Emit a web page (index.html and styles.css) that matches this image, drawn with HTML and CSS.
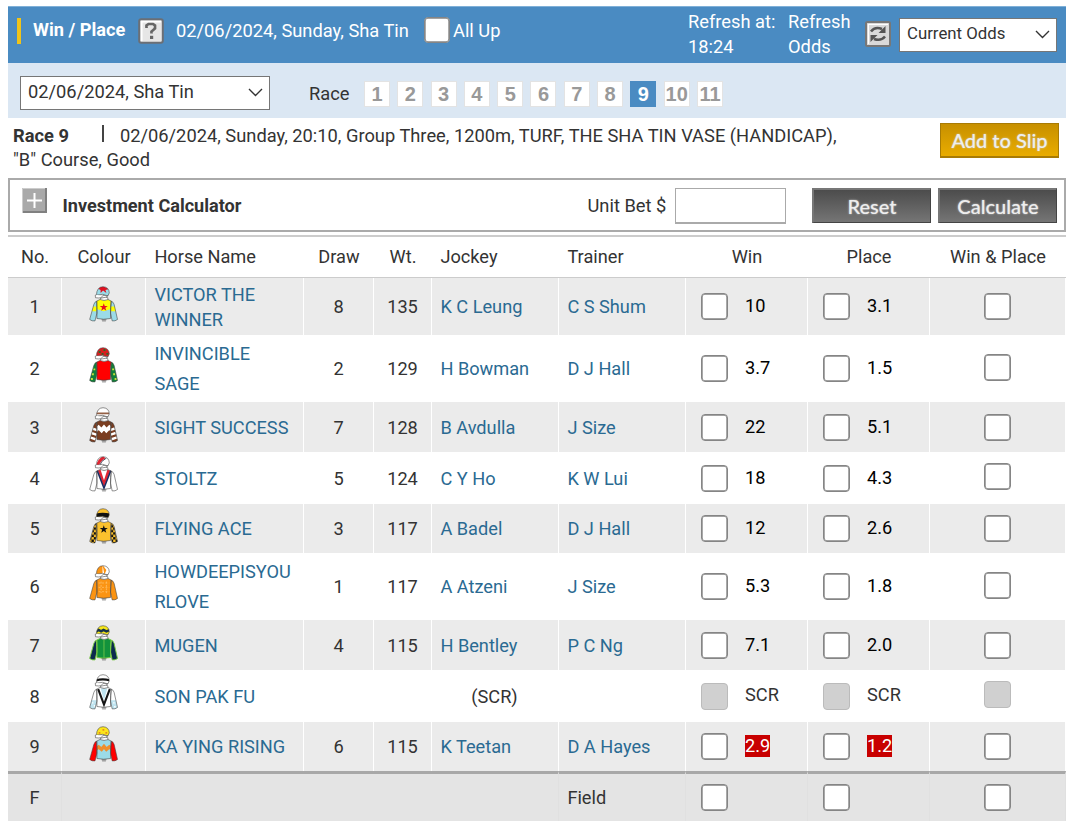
FILE: index.html
```html
<!DOCTYPE html>
<html lang="en">
<head>
    <meta charset="UTF-8">
    <title>Win / Place</title>
    <link rel="stylesheet" href="styles.css">
</head>
<body>
<!-- shared shapes of the silks -->
<svg class="defs" width="0" height="0">
    <defs>
        <path id="body" d="M8 15.5L12 13.5Q15.5 15.5 19 13.5L23 15.5L22.3 22V33.5Q15 35 8.2 33.5V22Z"/>
        <path id="sleeves" d="M8 15.5Q6 16 5 19L.7 34.5Q3 36.5 6.2 36L8.2 28ZM23 15.5Q25 16 26 19L29.5 34.5Q27 36.5 24 36L22.3 28Z"/>
        <path id="cap" d="M7.7 9.3Q8 .8 14.5 .6Q20.7 1 21 7L19.5 10.2L14 8.5Z"/>
        <path id="face" d="M7.7 9L6.5 9.3L6.7 12Q10 12.5 12.5 12L14.5 9.5L19.5 10L17.5 11.5L12 12.5V14Q15.5 15.5 19.5 14V12L17.5 11.5M13 34.8H18M13.5 36H17.5"/>
        <clipPath id="bodyClip"><use href="#body"/></clipPath>
        <clipPath id="sleeveClip"><use href="#sleeves"/></clipPath>
        <clipPath id="capClip"><use href="#cap"/></clipPath>
        <path id="star" d="M15.3 17.7L16.3 20.6H19.4L16.9 22.4L17.9 25.5L15.3 23.6L12.6 25.5L13.6 22.4L11.1 20.6H14.3Z"/>
        <pattern id="check" width="5" height="5" patternUnits="userSpaceOnUse"><path d="M0 0H5V5H0Z" fill="#fbc12d"/><path d="M0 0H2.5V2.5H0ZM2.5 2.5H5V5H2.5Z" fill="#111"/></pattern>
    </defs>
</svg>
<div class="all">
    <div class="top">
        <span class="mark"></span>
        <b class="title">Win / Place</b>
        <svg class="help" width="26" height="26" viewBox="0 0 26 26">
            <rect x="1.2" y="1.2" width="23.6" height="23.6" rx="2" fill="#e6e6e6" stroke="#6b6f75" stroke-width="2"/>
            <path d="M3 3H23V4.500H4.500V23H3Z" fill="#fff"/>
            <path d="M8.500 10V7.500L10.500 6H15L17 7.500V10.500L13.500 13.500V15.500" fill="none" stroke="#666" stroke-width="2.700"/>
            <rect x="12" y="17.800" width="3.200" height="3.200" fill="#666"/>
        </svg>
        <span class="date">02/06/2024, Sunday, Sha Tin</span>
        <label class="allup"><input type="checkbox">All Up</label>
        <div class="refreshAt">Refresh at:<br>18:24</div>
        <div class="refreshOdds">Refresh<br>Odds</div>
        <svg class="refresh" width="26" height="26" viewBox="0 0 26 26">
            <rect x="1" y="1" width="24" height="24" rx="1.500" fill="#d9d9d9" stroke="#777" stroke-width="2"/>
            <path d="M3 3H23V4H4V23H3Z" fill="#fff"/>
            <path d="M6 10.500Q10 5 17 8M20 15.500Q16 20.500 9 18" fill="none" stroke="#555" stroke-width="2.500"/>
            <path d="M20.500 5V12H13.500ZM5.500 21V14H12.500Z" fill="#555"/>
        </svg>
        <div class="select odds"><span>Current Odds</span><svg width="15" height="9" viewBox="0 0 15 9"><path d="M1 1L7.500 7.500L14 1"/></svg></div>
    </div>
    <div class="nav">
        <div class="select meeting"><span>02/06/2024, Sha Tin</span><svg width="15" height="9" viewBox="0 0 15 9"><path d="M1 1L7.500 7.500L14 1"/></svg></div>
        <span class="race">Race</span>
        <ul>
            <li>1</li><li>2</li><li>3</li><li>4</li><li>5</li><li>6</li><li>7</li><li>8</li><li class="current">9</li><li>10</li><li>11</li>
        </ul>
    </div>
    <div class="info">
        <p><b>Race 9</b><i class="sep"></i>02/06/2024, Sunday, 20:10, Group Three, 1200m, TURF, THE SHA TIN VASE (HANDICAP),<br>"B" Course, Good</p>
        <button class="btn gold">Add to Slip</button>
    </div>
    <div class="calc">
        <svg class="plus" width="25" height="25" viewBox="0 0 25 25">
            <path d="M0 0H25V25H0Z" fill="#a9a9a9"/>
            <path d="M.5 25V.5H25" fill="none" stroke="#ccc"/>
            <path d="M1 24H24V0" fill="none" stroke="#808080" stroke-width="2"/>
            <path d="M12.500 5V20M5 12.500H20" stroke="#fff" stroke-width="2"/>
        </svg>
        <b>Investment Calculator</b>
        <span class="unit">Unit Bet $</span>
        <input type="text" class="bet">
        <button class="btn">Reset</button>
        <button class="btn calculate">Calculate</button>
    </div>
    <table>
        <colgroup>
            <col class="c1"><col class="c2"><col class="c3"><col class="c4"><col class="c5"><col class="c6"><col class="c6"><col class="c7"><col class="c7"><col class="c8">
        </colgroup>
        <thead>
        <tr><th>No.</th><th>Colour</th><th class="l">Horse Name</th><th>Draw</th><th>Wt.</th><th class="l">Jockey</th><th class="l">Trainer</th><th>Win</th><th>Place</th><th>Win &amp; Place</th></tr>
        </thead>
        <tbody>
        <tr class="h57">
            <td>1</td>
            <td class="silk"><svg width="29" height="36" viewBox="0 0 30 37">
                <use href="#sleeves" fill="#9bdbe8"/><path clip-path="url(#sleeveClip)" d="M0 21H8V26H0ZM22 21H30V26H22Z" fill="#ff0"/>
                <use href="#body" fill="#9bdbe8"/><path clip-path="url(#bodyClip)" d="M6 12H25V23L15 26L6 23Z" fill="#ff0"/><use href="#star" fill="#e8101c"/>
                <use href="#cap" fill="#9bdbe8"/><path clip-path="url(#capClip)" d="M8 2L14 0L21 3L17 4L18 7L14.500 4.500L12 7V4Z" fill="#e01020"/>
                <g class="line"><use href="#sleeves"/><use href="#body"/><use href="#cap"/><use href="#face" class="face"/></g>
            </svg></td>
            <td class="l"><a>VICTOR THE<br>WINNER</a></td><td>8</td><td>135</td><td class="l"><a>K C Leung</a></td><td class="l"><a>C S Shum</a></td>
            <td class="bet-cell"><input type="checkbox"><span>10</span></td><td class="bet-cell"><input type="checkbox"><span>3.1</span></td><td class="wp"><input type="checkbox"></td>
        </tr>
        <tr class="h67 even">
            <td>2</td>
            <td class="silk"><svg width="29" height="36" viewBox="0 0 30 37">
                <use href="#sleeves" fill="#12803a"/><path d="M4.500 22h2v2h-2zM3 27h2v2h-2zM2 32h2v2h-2zM24 22h2v2h-2zM25 27h2v2h-2zM26.500 32h2v2h-2z" fill="#c6e23c"/>
                <use href="#body" fill="#f00"/><use href="#cap" fill="#d81e20"/><path d="M10 4h2v2h-2zM15 2h2v2h-2zM13 6h2v2h-2zM18 6h2v2h-2z" fill="#286b2a"/>
                <g class="line"><use href="#sleeves"/><use href="#body"/><use href="#cap"/><use href="#face" class="face"/></g>
            </svg></td>
            <td class="l tall"><a>INVINCIBLE<br>SAGE</a></td><td>2</td><td>129</td><td class="l"><a>H Bowman</a></td><td class="l"><a>D J Hall</a></td>
            <td class="bet-cell"><input type="checkbox"><span>3.7</span></td><td class="bet-cell"><input type="checkbox"><span>1.5</span></td><td class="wp"><input type="checkbox"></td>
        </tr>
        <tr class="h50">
            <td>3</td>
            <td class="silk"><svg width="29" height="36" viewBox="0 0 30 37">
                <use href="#sleeves" fill="#7a3d20"/><path clip-path="url(#sleeveClip)" d="M0 21L9 24M0 26L9 29M0 31L9 34M30 21L21 24M30 26L21 29M30 31L21 34" stroke="#fff" stroke-width="2.500"/>
                <use href="#body" fill="#7a3d20"/><path clip-path="url(#bodyClip)" d="M7 24L10 21L13 24L15.500 21L18 24L21 21L24 24" fill="none" stroke="#fff" stroke-width="4"/>
                <use href="#cap" fill="#fff"/><path clip-path="url(#capClip)" d="M7 6.500H22" stroke="#946045" stroke-width="2"/>
                <g class="line"><use href="#sleeves"/><use href="#body"/><use href="#cap"/><use href="#face" class="face"/></g>
            </svg></td>
            <td class="l"><a>SIGHT SUCCESS</a></td><td>7</td><td>128</td><td class="l"><a>B Avdulla</a></td><td class="l"><a>J Size</a></td>
            <td class="bet-cell"><input type="checkbox"><span>22</span></td><td class="bet-cell"><input type="checkbox"><span>5.1</span></td><td class="wp"><input type="checkbox"></td>
        </tr>
        <tr class="h52 even">
            <td>4</td>
            <td class="silk"><svg width="29" height="36" viewBox="0 0 30 37">
                <use href="#sleeves" fill="#fff"/><use href="#body" fill="#fff"/>
                <path d="M9 15L15.500 32L22 15L19 14L15.500 25L12 14Z" fill="#e12633"/><path d="M8.500 15L15.500 33L22.500 15" fill="none" stroke="#1b2c62" stroke-width="1.600"/>
                <use href="#cap" fill="#fff"/><path clip-path="url(#capClip)" d="M9 10Q10 4 16 1" fill="none" stroke="#e12633" stroke-width="3"/><path clip-path="url(#capClip)" d="M11 10Q12 5 18 2" fill="none" stroke="#445" stroke-width="1"/>
                <g class="line"><use href="#sleeves"/><use href="#body"/><use href="#cap"/><use href="#face" class="face"/></g>
            </svg></td>
            <td class="l"><a>STOLTZ</a></td><td>5</td><td>124</td><td class="l"><a>C Y Ho</a></td><td class="l"><a>K W Lui</a></td>
            <td class="bet-cell"><input type="checkbox"><span>18</span></td><td class="bet-cell"><input type="checkbox"><span>4.3</span></td><td class="wp"><input type="checkbox"></td>
        </tr>
        <tr class="h49">
            <td>5</td>
            <td class="silk"><svg width="29" height="36" viewBox="0 0 30 37">
                <use href="#sleeves" fill="url(#check)"/><use href="#body" fill="#fbc12d"/><use href="#star" fill="#111"/>
                <use href="#cap" fill="#fbc12d"/><path clip-path="url(#capClip)" d="M7 5.500Q14 4 22 5.500V9Q14 11 7 9Z" fill="#111"/>
                <g class="line"><use href="#sleeves"/><use href="#body"/><use href="#cap"/><use href="#face" class="face"/></g>
            </svg></td>
            <td class="l"><a>FLYING ACE</a></td><td>3</td><td>117</td><td class="l"><a>A Badel</a></td><td class="l"><a>D J Hall</a></td>
            <td class="bet-cell"><input type="checkbox"><span>12</span></td><td class="bet-cell"><input type="checkbox"><span>2.6</span></td><td class="wp"><input type="checkbox"></td>
        </tr>
        <tr class="h67 even">
            <td>6</td>
            <td class="silk"><svg width="29" height="36" viewBox="0 0 30 37">
                <use href="#sleeves" fill="#fb9413"/><use href="#body" fill="#fb9413"/>
                <path d="M10 18.500H21M10 23H21M10 27.500H21M12.500 17V29M18 17V29" stroke="#ffc06a" stroke-width=".8" stroke-dasharray="2 1.500"/>
                <use href="#cap" fill="#fff"/><path clip-path="url(#capClip)" d="M7 0H14V10H7ZM14 0L18 5L16 10" fill="#fb9413"/>
                <g class="line"><use href="#sleeves"/><use href="#body"/><use href="#cap"/><use href="#face" class="face"/></g>
            </svg></td>
            <td class="l tall"><a>HOWDEEPISYOU<br>RLOVE</a></td><td>1</td><td>117</td><td class="l"><a>A Atzeni</a></td><td class="l"><a>J Size</a></td>
            <td class="bet-cell"><input type="checkbox"><span>5.3</span></td><td class="bet-cell"><input type="checkbox"><span>1.8</span></td><td class="wp"><input type="checkbox"></td>
        </tr>
        <tr class="h50">
            <td>7</td>
            <td class="silk"><svg width="29" height="36" viewBox="0 0 30 37">
                <use href="#sleeves" fill="#0c2b4e"/><use href="#body" fill="#12923c"/><path d="M15.500 15V34" stroke="#6cc24a" stroke-width="1"/>
                <use href="#cap" fill="#f6e61a"/><path clip-path="url(#capClip)" d="M7 7L10 5L12.500 6.500L15 5L18 6.500L22 5" fill="none" stroke="#14324a" stroke-width="2.500"/>
                <g class="line lime"><use href="#sleeves"/><use href="#body"/></g>
                <g class="line"><use href="#cap"/><use href="#face" class="face"/></g>
            </svg></td>
            <td class="l"><a>MUGEN</a></td><td>4</td><td>115</td><td class="l"><a>H Bentley</a></td><td class="l"><a>P C Ng</a></td>
            <td class="bet-cell"><input type="checkbox"><span>7.1</span></td><td class="bet-cell"><input type="checkbox"><span>2.0</span></td><td class="wp"><input type="checkbox"></td>
        </tr>
        <tr class="h52 even scr">
            <td>8</td>
            <td class="silk"><svg width="29" height="36" viewBox="0 0 30 37">
                <use href="#sleeves" fill="#fff"/><path clip-path="url(#sleeveClip)" d="M0 27H8V37H0ZM22 27H30V37H22Z" fill="#bfe4f0"/><path d="M3 29h1.500v1.500H3zM5 32h1.500v1.500H5zM25 29h1.500v1.500H25zM26 33h1.500v1.500H26z" fill="#fff"/>
                <use href="#body" fill="#fff"/><path d="M12 14.500H19L15.500 27Z" fill="#bfe4f0"/><path d="M9.500 15.500L15.500 31.500L21.500 15.500" fill="none" stroke="#151515" stroke-width="2.200"/>
                <use href="#cap" fill="#fff"/><path clip-path="url(#capClip)" d="M7 6.500Q14 4.500 22 6.500" fill="none" stroke="#151515" stroke-width="2.400"/>
                <g class="line"><use href="#sleeves"/><use href="#body"/><use href="#cap"/><use href="#face" class="face"/></g>
            </svg></td>
            <td class="l"><a>SON PAK FU</a></td><td class="scratched" colspan="4">(SCR)</td>
            <td class="bet-cell"><input type="checkbox" disabled><span>SCR</span></td><td class="bet-cell"><input type="checkbox" disabled><span>SCR</span></td><td class="wp"><input type="checkbox" disabled></td>
        </tr>
        <tr class="h49 hot">
            <td>9</td>
            <td class="silk"><svg width="29" height="36" viewBox="0 0 30 37">
                <use href="#sleeves" fill="#f00"/><use href="#body" fill="#9bdbe8"/>
                <path clip-path="url(#bodyClip)" d="M7 24L10 21.500L13 24L15.500 21L18 24L21 21.500L24 24" fill="none" stroke="#ef8e2c" stroke-width="3.500"/>
                <use href="#cap" fill="#fbe51a"/><path d="M10 6h1.800v1.800H10zM14 3h1.800v1.800H14zM17 6h1.800v1.800H17z" fill="#e88a20"/>
                <g class="line"><use href="#sleeves"/><use href="#body"/><use href="#cap"/><use href="#face" class="face"/></g>
            </svg></td>
            <td class="l"><a>KA YING RISING</a></td><td>6</td><td>115</td><td class="l"><a>K Teetan</a></td><td class="l"><a>D A Hayes</a></td>
            <td class="bet-cell"><input type="checkbox"><span>2.9</span></td><td class="bet-cell"><input type="checkbox"><span>1.2</span></td><td class="wp"><input type="checkbox"></td>
        </tr>
        </tbody>
        <tfoot>
        <tr>
            <td>F</td><td colspan="5"></td><td class="l">Field</td><td class="bet-cell"><input type="checkbox"></td><td class="bet-cell"><input type="checkbox"></td><td class="wp"><input type="checkbox"></td>
        </tr>
        </tfoot>
    </table>
</div>
</body>
</html>
```
FILE: styles.css
```css
* {
    margin: 0;
    padding: 0;
    box-sizing: border-box;
    list-style: none;
}

body {
    background: #fff;
    color: #333;
    font-family: Roboto, "Liberation Sans", sans-serif;
    font-size: 18.3px;
    line-height: 25px;
}

.defs {
    display: block;
}

.all {
    width: 1058px;
    margin-left: 8px;
    padding-top: 6px;
}

input[type=checkbox] {
    appearance: none;
    flex: none;
    display: block;
    width: 27px;
    height: 27px;
    border: 1px solid #858585;
    border-radius: 4px;
    background: #fff;
    box-shadow: inset 0 0 0 .7px #858585;
}

input[type=checkbox]:disabled {
    background: #d0d0d0;
    border-color: #bbb;
    box-shadow: none;
}

/* blue title bar */
.top {
    display: flex;
    align-items: flex-start;
    height: 57px;
    padding: 11px 9px 0 9px;
    border-top: 1px solid #7fb0d8;
    background: #4a8bc2;
    color: #fff;
    white-space: nowrap;
}

.mark {
    width: 4px;
    height: 26px;
    background: #f0c419;
}

.title {
    width: 105px;
    margin-left: 12px;
    margin-top: -1px;
    font-size: 18.2px;
}

.date {
    width: 249px;
    margin-left: 12px;
}

.allup {
    display: flex;
    width: 263px;
}

.allup input {
    width: 26px;
    height: 26px;
    margin: -1px 3px 0 -1px;
}

.refreshAt {
    width: 100px;
    margin-top: -9px;
}

.refreshOdds {
    width: 77px;
    margin-top: -9px;
}

.refresh {
    margin-top: 3px;
}

.select {
    display: flex;
    align-items: center;
    justify-content: space-between;
    height: 34px;
    padding: 0 6px 2px 7px;
    border: 1px solid #767676;
    background: #fff;
    color: #333;
}

.select svg {
    margin-top: 2px;
    fill: none;
    stroke: #333;
    stroke-width: 1.4;
}

.odds {
    width: 158px;
    margin-left: 8px;
    padding-bottom: 3px;
    font-size: 16.8px;
}

/* meeting and race numbers */
.nav {
    display: flex;
    align-items: center;
    height: 55px;
    padding-left: 12px;
    padding-bottom: 1px;
    padding-top: 5px;
    background: #dbe7f3;
}

.meeting {
    width: 250px;
}

.race {
    width: 54px;
    margin-left: 39px;
    padding-top: 2px;
}

.nav ul {
    display: flex;
    gap: 7.3px;
    padding: 2px 0 0 1px;
}

.nav li {
    width: 26px;
    height: 26px;
    border: 1px solid #e3e3e3;
    background: #fff;
    color: #999;
    font: bold 20px/24px "Liberation Sans", sans-serif;
    text-align: center;
}

.nav li.current {
    border-color: #4a8bc2;
    background: #4a8bc2;
    color: #fff;
}

.info {
    display: flex;
    justify-content: space-between;
    height: 60px;
    padding: 5px 7px 0 5px;
    line-height: 24px;
    white-space: nowrap;
}

.info p {
    padding-top: 1px;
}

.sep {
    display: inline-block;
    width: 2px;
    height: 17px;
    margin: 0 16px 0 33px;
    background: #444;
}

.btn {
    width: 119px;
    height: 35px;
    border: 1px solid #444;
    border-top: 2px solid #777;
    border-left: 2px solid #777;
    background: linear-gradient(#4c4c4c, #757575);
    color: #eee;
    font: 500 20px/30px Lato, sans-serif;
    text-shadow: 0 0 2px #ccc;
}

.gold {
    border: 1px solid #a87b05;
    border-bottom-width: 2px;
    background: linear-gradient(#c79000, #e9ac00);
}

/* calculator */
.calc {
    display: flex;
    align-items: flex-start;
    height: 54px;
    padding: 8px 7px 0 12px;
    border: 2px solid #aaa;
    line-height: 36px;
}

.calc b {
    width: 525px;
    margin-left: 15.5px;
    font-size: 18.1px;
}

.unit {
    white-space: nowrap;
}

.bet {
    width: 111px;
    height: 36px;
    margin: 0 26px 0 auto;
    border: 1px solid #aaa;
    border-bottom-width: 2px;
}

.calculate {
    margin-left: 7px;
}

/* runners */
table {
    width: 1058px;
    margin-top: 3px;
    border-spacing: 0;
    table-layout: fixed;
    font-size: 18.2px;
}

.c1 { width: 54px; }
.c2 { width: 84px; }
.c3 { width: 158px; }
.c4 { width: 70px; }
.c5 { width: 58px; }
.c6 { width: 127px; }
.c7 { width: 122px; }
.c8 { width: 136px; }

th {
    height: 43px;
    padding-bottom: 1px;
    border-top: 2px solid #ccc;
    border-bottom: 1px solid #ccc;
    font-weight: normal;
    text-align: center;
}

td {
    border-right: 1px solid #fff;
    background: #ebebeb;
    text-align: center;
    vertical-align: middle;
}

.even td {
    background: #fff;
}

.l {
    padding-left: 8.4px;
    text-align: left;
}

.tall {
    line-height: 30px;
}

.h57 { height: 57px; }
.h67 { height: 67px; }
.h52 { height: 52px; }
.h50 { height: 50px; }
.h49 { height: 49px; }

a {
    color: #2a6a92;
}

.silk {
    padding-bottom: 5px;
}

.even .silk {
    padding-bottom: 8px;
}

.silk svg {
    display: block;
    margin: 0 auto;
}

.line {
    fill: none;
    stroke: #444;
    stroke-width: .6;
}

.lime {
    stroke: #7ac943;
    stroke-width: 1;
}

.face {
    fill: #fff;
}

.bet-cell input {
    float: left;
    margin-left: 15px;
}

.bet-cell span {
    float: left;
    margin: 0 0 0 17px;
    color: #000;
}

.scr .bet-cell span {
    margin-top: -1px;
    color: #333;
}

.hot .bet-cell span {
    height: 22px;
    margin-top: 2px;
    background: #c80000;
    color: #fff;
    line-height: 22px;
}

.wp input {
    margin: 0 auto;
}

.even .wp {
    padding-bottom: 3px;
}

tfoot td {
    height: 50px;
    border-top: 3px solid #a8a8a8;
    border-right-color: #e0e0e0;
    background: #e4e4e4;
}
```
